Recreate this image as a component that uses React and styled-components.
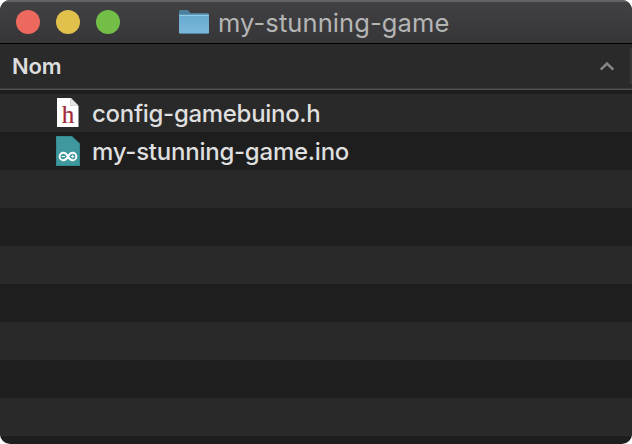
import React from "react";
import styled, { createGlobalStyle } from "styled-components";

const GlobalStyle = createGlobalStyle`
  * { box-sizing: border-box; }
  body { margin: 0; background: #fff; overflow: hidden; }
`;

const Window = styled.main`
  width: 632px;
  height: 444px;
  display: flex;
  flex-direction: column;
  overflow: hidden;
  border-radius: 10px;
  background: #1e1e1e;
  font-family: Inter, "Liberation Sans", sans-serif;
`;

const TitleBar = styled.header`
  height: 44px;
  flex: none;
  display: grid;
  grid-template-columns: 179px 1fr;
  align-items: center;
  background: linear-gradient(#414143, #363638);
  border-top: 2px solid #626264;
  border-bottom: 1px solid #000;
`;

const Controls = styled.div`
  display: flex;
  gap: 16px;
  padding: 0 0 1px 16px;
`;

const Light = styled.span`
  width: 24px;
  height: 24px;
  border-radius: 50%;
  background: ${({ $color }) => $color};
`;

const Title = styled.div`
  display: flex;
  align-items: center;
  gap: 8px;
  padding-top: 1px;
`;

const TitleText = styled.h1`
  margin: 0;
  font-size: 25.5px;
  line-height: 32px;
  font-weight: 400;
  letter-spacing: 0.1px;
  color: #b5b5b6;
  white-space: nowrap;
`;

const ColumnHeader = styled.div`
  height: 46px;
  flex: none;
  display: flex;
  align-items: center;
  justify-content: space-between;
  padding: 0 0 1px 12px;
  background: #2a2a2a;
  border-bottom: 1px solid #505151;
  box-shadow: inset 0 -1px #3a3b3b;
`;

const ColumnLabel = styled.span`
  font-size: 22px;
  line-height: 28px;
  font-weight: 600;
  letter-spacing: -0.2px;
  color: #dedede;
`;

const SortArea = styled.div`
  height: 36px;
  width: 33px;
  display: flex;
  align-items: center;
  border-right: 2px solid #383838;
`;

const FileList = styled.ul`
  list-style: none;
  margin: 4px 0 0;
  padding: 0;
`;

const FileRow = styled.li`
  height: 38px;
  display: flex;
  align-items: center;
  gap: 12px;
  padding-left: 56px;
  &:nth-child(odd) { background: #292929; }
`;

const FileName = styled.span`
  padding-top: 2px;
  font-size: 24px;
  line-height: 30px;
  font-weight: 500;
  letter-spacing: ${({ $tracking }) => $tracking}px;
  color: #dfdfdf;
  white-space: nowrap;
`;

const Graphic = styled.svg`
  display: block;
  flex: none;
`;

const FolderIcon = () => (
  <Graphic width="31" height="26" viewBox="0 0 31 26">
    <defs>
      <linearGradient id="folder" x2="0" y2="1">
        <stop stopColor="#66a9cf" />
        <stop offset="1" stopColor="#7cb8da" />
      </linearGradient>
    </defs>
    <path d="M0 4V1.500Q0 0 1.500 0h7q1 0 1.700 1.500L11.500 3H28.500Q30 3 30 4.500V6H0Z" fill="#4c809d" />
    <path d="M0 4.500h30v17.800q0 1.200-1.200 1.200H1.200Q0 23.500 0 22.300Z" fill="url(#folder)" />
    <path d="M.5 5.500h29" stroke="#91cae5" />
    <path d="M.8 23.500h28.400" stroke="#4f86a5" />
  </Graphic>
);

const HeaderFileIcon = () => (
  <Graphic width="24" height="30" viewBox="0 0 24 30">
    <path d="M1 0h14l7.500 8v21H1Z" fill="#fff" />
    <path d="M14.500 0v7.500h8Z" fill="#e5e5e5" />
    <path d="M14.500 1v6.500h7" fill="none" stroke="#ccc" strokeWidth=".7" />
    <text x="12" y="24.700" textAnchor="middle" fontFamily="Liberation Serif, serif" fontSize="25" fill="#a22938" stroke="#a22938" strokeWidth=".2">h</text>
  </Graphic>
);

const ArduinoIcon = () => (
  <Graphic width="24" height="30" viewBox="0 0 24 30">
    <path d="M0 0h16l8 7.500V30H0Z" fill="#338a91" />
    <path d="M1 1h14.500L23 8v21H1Z" fill="#3f989e" />
    <path d="M12 20.500C10.500 17.700 9.200 16.700 7.400 16.700a3.800 3.800 0 0 0 0 7.600c1.800 0 3.100-1 4.600-3.800s2.800-3.800 4.600-3.800a3.800 3.800 0 0 1 0 7.600c-1.800 0-3.100-1-4.600-3.800Z" fill="none" stroke="#fff" strokeWidth="1.900" />
    <path d="M5.700 20.500h3.200m6.200 0h3.200m-1.600-1.600v3.200" stroke="#fff" strokeWidth="1" />
  </Graphic>
);

const files = [
  { name: "config-gamebuino.h", Icon: HeaderFileIcon, tracking: -0.3 },
  { name: "my-stunning-game.ino", Icon: ArduinoIcon, tracking: -0.24 },
];
const emptyRows = Array.from({ length: 7 }, (_, i) => i);

export default function App() {
  return (
    <>
      <GlobalStyle />
      <Window>
        <TitleBar>
          <Controls>
            <Light $color="#ed695e" />
            <Light $color="#e1c04c" />
            <Light $color="#72be47" />
          </Controls>
          <Title>
            <FolderIcon />
            <TitleText>my-stunning-game</TitleText>
          </Title>
        </TitleBar>
        <ColumnHeader>
          <ColumnLabel>Nom</ColumnLabel>
          <SortArea>
            <Graphic width="16" height="10" viewBox="0 0 16 10">
              <path d="M1.700 8.700 8 2.500l6.300 6.200" fill="none" stroke="#858585" strokeWidth="2.500" />
            </Graphic>
          </SortArea>
        </ColumnHeader>
        <FileList>
          {files.map(({ name, Icon, tracking }) => (
            <FileRow key={name}>
              <Icon />
              <FileName $tracking={tracking}>{name}</FileName>
            </FileRow>
          ))}
          {emptyRows.map((row) => <FileRow key={row} />)}
        </FileList>
      </Window>
    </>
  );
}
